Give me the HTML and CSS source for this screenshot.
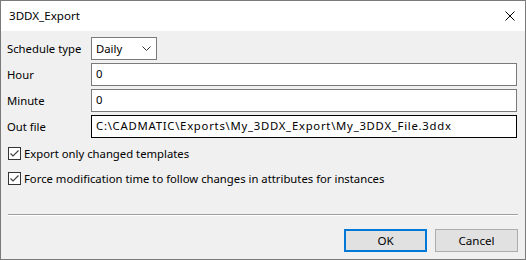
FILE: index.html
```html
<!DOCTYPE html>
<html lang="en">
<head>
    <meta charset="UTF-8">
    <title>3DDX_Export</title>
    <link rel="stylesheet" href="styles.css">
</head>
<body>
    <div class="window">
        <div class="titlebar">
            <span class="title">3DDX_Export</span>
            <svg class="close" width="10" height="10" viewBox="0 0 10 10">
                <path d="M0.5 0.5 L9.5 9.5 M9.5 0.5 L0.5 9.5" stroke="#000" stroke-width="1" fill="none"/>
            </svg>
        </div>
        <div class="content">
            <div class="form">
                <label class="label">Schedule type</label>
                <div class="combo">
                    <span>Daily</span>
                    <svg width="9" height="5" viewBox="0 0 9 5">
                        <path d="M0.5 0.5 L4.5 4.5 L8.5 0.5" stroke="#333" stroke-width="1" fill="none"/>
                    </svg>
                </div>

                <label class="label">Hour</label>
                <div class="field">0</div>

                <label class="label">Minute</label>
                <div class="field">0</div>

                <label class="label">Out file</label>
                <div class="field focused path">C:\CADMATIC\Exports\My_3DDX_Export\My_3DDX_File.3ddx</div>
            </div>

            <div class="checks">
                <div class="check">
                    <span class="box">
                        <svg width="11" height="11" viewBox="0 0 11 11">
                            <path d="M1.5 5.5 L4 8 L9.5 2.5" stroke="#444" stroke-width="1.2" fill="none"/>
                        </svg>
                    </span>
                    <span>Export only changed templates</span>
                </div>
                <div class="check">
                    <span class="box">
                        <svg width="11" height="11" viewBox="0 0 11 11">
                            <path d="M1.5 5.5 L4 8 L9.5 2.5" stroke="#444" stroke-width="1.2" fill="none"/>
                        </svg>
                    </span>
                    <span>Force modification time to follow changes in attributes for instances</span>
                </div>
            </div>

            <div class="separator"></div>

            <div class="buttons">
                <button class="btn default">OK</button>
                <button class="btn">Cancel</button>
            </div>
        </div>
    </div>
</body>
</html>
```

FILE: styles.css
```css
body {
    margin: 0;
    background-color: #f0f0f0;
    font-family: "Noto Sans", "Open Sans", sans-serif;
    font-size: 11.3px;
    color: #000;
}
.window {
    width: 526px;
    height: 260px;
    box-sizing: border-box;
    border: 1px solid #7a7a7a;
    background-color: #f0f0f0;
    display: flex;
    flex-direction: column;
}
.titlebar {
    height: 30px;
    background-color: #fff;
    display: flex;
    align-items: center;
    justify-content: space-between;
    padding: 0 10px 0 8px;
    flex-shrink: 0;
}
.title {
    font-size: 11.6px;
    line-height: 16px;
}
.close {
    display: block;
}
.content {
    flex: 1;
    padding: 6px 7px 0 6px;
    display: flex;
    flex-direction: column;
}
.form {
    display: grid;
    grid-template-columns: 84px 426px;
    grid-auto-rows: 23px;
    row-gap: 3px;
    align-items: center;
}
.label {
    line-height: 23px;
}
.combo {
    width: 66px;
    height: 23px;
    box-sizing: border-box;
    border: 1px solid #7a7a7a;
    background-color: #fff;
    display: flex;
    align-items: center;
    justify-content: space-between;
    padding: 0 5px 0 4px;
}
.field {
    height: 23px;
    box-sizing: border-box;
    border: 1px solid #7a7a7a;
    background-color: #fff;
    padding: 0 4px;
    line-height: 20px;
    white-space: nowrap;
}
.field.focused {
    border-color: #000;
}
.field.path {
    letter-spacing: 0.75px;
}
.checks {
    margin-top: 9px;
    display: flex;
    flex-direction: column;
    gap: 12px;
}
.check {
    display: flex;
    align-items: center;
    gap: 3px;
    height: 13px;
    padding-left: 1px;
}
.box {
    width: 13px;
    height: 13px;
    box-sizing: border-box;
    border: 1px solid #333;
    background-color: #fff;
    display: flex;
    align-items: center;
    justify-content: center;
    flex-shrink: 0;
}
.box svg {
    display: block;
}
.separator {
    margin-top: 29px;
    margin-left: 1px;
    height: 1px;
    background-color: #a0a0a0;
    border-bottom: 1px solid #fff;
}
.buttons {
    margin-top: 13px;
    display: flex;
    justify-content: flex-end;
    gap: 8px;
}
.btn {
    width: 83px;
    height: 23px;
    box-sizing: border-box;
    border: 1px solid #adadad;
    background-color: #e1e1e1;
    font-family: inherit;
    font-size: 11.6px;
    color: #000;
    padding: 0;
}
.btn.default {
    border: 2px solid #0078d7;
}
```
